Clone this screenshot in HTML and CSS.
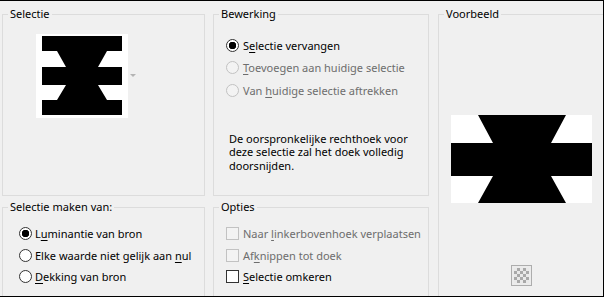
FILE: index.html
```html
<!DOCTYPE html>
<html lang="nl">
<head>
    <meta charset="UTF-8">
    <meta name="viewport" content="width=device-width, initial-scale=1.0">
    <title>Selectie uit masker</title>
    <link rel="stylesheet" href="styles.css">
</head>
<body>
    <div class="dialog">
        <fieldset class="group sel">
            <legend>Selectie</legend>
            <div class="thumb-row">
                <svg class="thumb" width="92" height="84" viewBox="0 0 92 84">
                    <rect width="92" height="84" fill="#fff"/>
                    <polygon fill="#000" points="6,2 86,2 86,17 71,17 62,33 86,33 86,51 62,51 71,66 86,66 86,81 6,81 6,66 21,66 30,51 6,51 6,33 30,33 21,17 6,17"/>
                </svg>
                <span class="drop"></span>
            </div>
        </fieldset>

        <fieldset class="group edit">
            <legend>Bewerking</legend>
            <div class="rows wide">
                <label class="opt"><input type="radio" name="op" checked><span>S<u>e</u>lectie vervangen</span></label>
                <label class="opt off"><input type="radio" name="op" disabled><span><u>T</u>oevoegen aan huidige selectie</span></label>
                <label class="opt off"><input type="radio" name="op" disabled><span>Van <u>h</u>uidige selectie aftrekken</span></label>
            </div>
            <p class="note">De oorspronkelijke rechthoek voor deze selectie zal het doek volledig doorsnijden.</p>
        </fieldset>

        <fieldset class="group preview">
            <legend>Voorbeeld</legend>
            <div class="preview-body">
                <svg width="141" height="88" viewBox="0 0 141 88">
                    <rect width="141" height="88" fill="#fff"/>
                    <polygon fill="#000" points="27,0 115,0 100,28 141,28 141,61 100,61 115,88 27,88 42,61 0,61 0,28 42,28"/>
                </svg>
                <button class="bg-toggle" type="button"><span></span></button>
            </div>
        </fieldset>

        <fieldset class="group src">
            <legend>Selectie maken van:</legend>
            <div class="rows">
                <label class="opt"><input type="radio" name="src" checked><span>L<u>u</u>minantie van bron</span></label>
                <label class="opt"><input type="radio" name="src"><span>Elke waarde niet gelijk aan <u>n</u>ul</span></label>
                <label class="opt"><input type="radio" name="src"><span><u>D</u>ekking van bron</span></label>
            </div>
        </fieldset>

        <fieldset class="group opts">
            <legend>Opties</legend>
            <div class="rows">
                <label class="opt off"><input type="checkbox" disabled><span>Naar <u>l</u>inkerbovenhoek verplaatsen</span></label>
                <label class="opt off"><input type="checkbox" disabled><span>Af<u>k</u>nippen tot doek</span></label>
                <label class="opt"><input type="checkbox"><span><u>S</u>electie omkeren</span></label>
            </div>
        </fieldset>
    </div>
</body>
</html>
```

FILE: styles.css
```css
body { margin: 0; background: #f0f0f0; font-family: "Noto Sans", sans-serif; font-size: 11px; color: #000; }

.dialog {
    box-sizing: border-box;
    width: 604px;
    height: 297px;
    padding: 5px 0 0 2px;
    border-top: 1px solid #000;
    border-right: 1px solid #000;
    border-bottom: 1px solid #000;
    overflow: hidden;
    display: grid;
    grid-template-columns: 203px 216px 168px;
    grid-template-rows: 190px 110px;
    grid-template-areas: "sel edit preview" "src opts preview";
    column-gap: 8px;
    row-gap: 3px;
}

.group { margin: 0; padding: 0; min-width: 0; border: 1px solid #dcdcdc; }
.group legend { margin-left: 5px; padding: 0 2px; line-height: 16px; }

.sel { grid-area: sel; }
.edit { grid-area: edit; }
.preview { grid-area: preview; margin-left: 1px; }
.src { grid-area: src; }
.opts { grid-area: opts; }

/* selectie thumbnail */
.thumb-row { display: flex; align-items: center; padding: 12px 0 0 33px; }
.thumb { display: block; }
.drop { width: 0; height: 0; margin: 0 0 2px 2px; border-left: 3px solid transparent; border-right: 3px solid transparent; border-top: 3px solid #b4b4b4; }

/* radio / checkbox rows */
.rows { display: flex; flex-direction: column; padding: 8px 0 0 16px; }
.rows.wide { padding: 12px 0 0 12px; }
.opts .rows { padding-left: 12px; }
.opt { display: flex; align-items: center; height: 21.5px; white-space: nowrap; }
.wide .opt { height: 22.5px; }
.opt span { margin-left: 3px; }
.opts .opt span, .wide .opt span { margin-left: 4px; }
.opt u { text-underline-offset: 2px; }
.opt.off { color: #6d6d6d; }

.opt input { appearance: none; margin: 0; width: 13px; height: 13px; border: 1px solid #333; background: #fff; flex: none; }
.opt input[type="radio"] { border-radius: 50%; }
.opt input[type="radio"]:checked { background: radial-gradient(circle, #000 0 3.5px, #fff 4px); }
.opt input:disabled { border-color: #c2c2c2; background: #f3f3f3; }

.note { margin: 30px 0 0 15px; width: 188px; line-height: 13.5px; }

/* voorbeeld */
.preview-body { display: flex; flex-direction: column; align-items: center; padding-top: 93px; }
.preview-body svg { display: block; }
.bg-toggle { margin-top: 62px; width: 21px; height: 21px; padding: 2px; border: 1px solid #adadad; background: #ececec; box-sizing: border-box; }
.bg-toggle span { display: block; width: 15px; height: 15px; background: repeating-conic-gradient(#a9a9a9 0 25%, #e9e9e9 0 50%) 0 0 / 6px 6px; }
```
